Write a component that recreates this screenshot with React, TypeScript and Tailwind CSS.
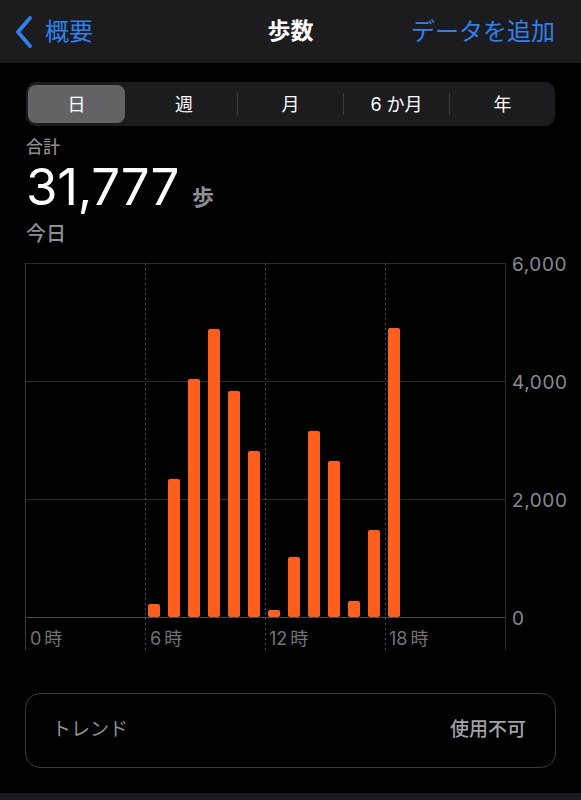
import React from "react";

const bars = [13, 138, 238, 288, 226, 166, 7, 60, 186, 156, 16, 87, 289];

function Chart() {
  const base = 367;
  return (
    <svg width={581} height={400} className="block">
      {[13.5, 131.5, 249.5].map((y) => (
        <line key={y} x1={25} x2={505} y1={y} y2={y} stroke="#2a2a2c" strokeWidth={1} />
      ))}
      <line x1={25} x2={505} y1={367.5} y2={367.5} stroke="#48484a" strokeWidth={1} />
      <line x1={25.5} x2={25.5} y1={13} y2={400} stroke="#3a3a3c" strokeWidth={1} />
      <line x1={505.5} x2={505.5} y1={13} y2={400} stroke="#2c2c2e" strokeWidth={1} />
      {[145.5, 265.5, 385.5].map((x) => (
        <line key={x} x1={x} x2={x} y1={13} y2={400} stroke="#4a4a4c" strokeWidth={1} strokeDasharray="2 3" />
      ))}
      {bars.map((h, i) => (
        <rect key={i} x={148 + i * 20} y={base - h} width={12} height={h} rx={2} fill="#ff5f1c" />
      ))}
      {[
        [30, "0"],
        [150, "6"],
        [269, "12"],
        [389, "18"],
      ].map(([x, t]) => (
        <text key={t as string} x={x as number} y={395} fontSize={18} fill="#727276">
          <tspan>{t}</tspan>
          <tspan dx={3}>時</tspan>
        </text>
      ))}
      {[
        [14, "6,000"],
        [132, "4,000"],
        [250, "2,000"],
        [368, "0"],
      ].map(([y, t]) => (
        <text key={t as string} x={512} y={y as number} fontSize={19} letterSpacing={0.6} fill="#8a8a8e" dominantBaseline="central">
          {t}
        </text>
      ))}
    </svg>
  );
}

export default function App() {
  const segs = ["週", "月", "6 か月", "年"];
  return (
    <div className="w-[581px] h-[800px] bg-black text-white font-['Inter','Noto_Sans_CJK_JP',sans-serif] flex flex-col overflow-hidden">
      <div className="h-[63px] bg-[#1c1c1e] flex items-center px-[15px] shrink-0">
        <div className="flex items-center w-[180px] text-[#2f80ed]">
          <svg width={20} height={32} viewBox="0 0 20 32" className="mr-[10px]">
            <path d="M15 2 L3 16 L15 30" fill="none" stroke="#2f80ed" strokeWidth={3.8} strokeLinecap="round" strokeLinejoin="round" />
          </svg>
          <span className="text-[24px] leading-none">概要</span>
        </div>
        <div className="flex-1 text-center text-[23px] font-bold leading-none">歩数</div>
        <div className="w-[180px] text-right text-[24px] leading-none text-[#2f80ed] pr-[11px]">データを追加</div>
      </div>

      <div className="mt-[19px] mx-[26px] h-[44px] rounded-[10px] bg-[#1c1c1e] flex items-center shrink-0">
        <div className="w-[105px] h-full flex items-center pl-[2px]">
          <div className="w-[97px] h-[38px] rounded-[8px] bg-[#636366] flex items-center justify-center text-[18px]">日</div>
        </div>
        {segs.map((s, i) => (
          <div key={s} className="flex-1 h-full flex items-center relative">
            {i > 0 && <div className="w-px h-[22px] bg-[#3a3a3c]" />}
            <div className="flex-1 text-center text-[18px] whitespace-pre">{s}</div>
          </div>
        ))}
      </div>

      <div className="h-[124px] px-[26px] shrink-0">
        <div className="mt-[10px] text-[17px] leading-[22px] text-[#8e8e93] font-medium">合計</div>
        <div className="mt-[4px] flex items-baseline h-[50px]">
          <span className="text-[51px] leading-[50px] font-normal tracking-[-0.3px]">31,777</span>
          <span className="ml-[13px] text-[22px] font-bold text-[#8e8e93]">歩</span>
        </div>
        <div className="mt-[10px] text-[20px] leading-[24px] text-[#8e8e93] font-medium">今日</div>
      </div>

      <Chart />

      <div className="mt-[43px] mx-[25px] h-[75px] rounded-[15px] border border-[#3a3a3c] flex items-center justify-between pl-[26px] pr-[29px] shrink-0">
        <span className="text-[19px] text-[#8e8e93]">トレンド</span>
        <span className="text-[19px] text-[#a1a1a6] font-medium">使用不可</span>
      </div>

      <div className="flex-1" />
      <div className="h-[7px] bg-[#1c1c1e] shrink-0" />
    </div>
  );
}
